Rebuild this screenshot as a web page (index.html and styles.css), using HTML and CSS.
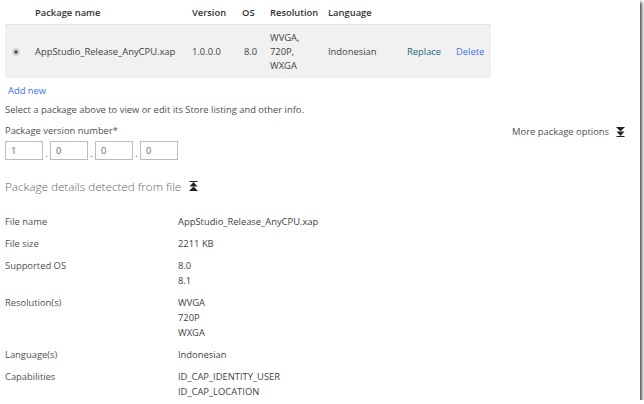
FILE: index.html
```html
<!DOCTYPE html>
<html lang="en">
<head>
  <meta charset="UTF-8" />
  <title>Packages</title>
  <link rel="stylesheet" href="styles.css">
</head>
<body>
  <div class="frame">
    <table class="packages">
      <colgroup>
        <col class="c-radio"><col class="c-name"><col class="c-ver"><col class="c-os">
        <col class="c-res"><col class="c-lang"><col class="c-rep"><col class="c-del">
      </colgroup>
      <thead>
        <tr>
          <th></th>
          <th>Package name</th>
          <th>Version</th>
          <th>OS</th>
          <th>Resolution</th>
          <th>Language</th>
          <th></th>
          <th></th>
        </tr>
      </thead>
      <tbody>
        <tr class="selected">
          <td><span class="radio"></span></td>
          <td>AppStudio_Release_AnyCPU.xap</td>
          <td>1.0.0.0</td>
          <td class="os">8.0</td>
          <td class="res">WVGA,<br>720P,<br>WXGA</td>
          <td>Indonesian</td>
          <td><a class="replace" href="#">Replace</a></td>
          <td><a class="link" href="#">Delete</a></td>
        </tr>
      </tbody>
    </table>

    <a class="link add-new" href="#">Add new</a>
    <p class="hint">Select a package above to view or edit its Store listing and other info.</p>

    <div class="version-row">
      <div class="version">
        <div class="field-label">Package version number*</div>
        <div class="version-inputs">
          <input class="ver-box" value="1"><span class="dot">.</span>
          <input class="ver-box" value="0"><span class="dot">.</span>
          <input class="ver-box" value="0"><span class="dot">.</span>
          <input class="ver-box" value="0">
        </div>
      </div>
      <div class="more-options">
        More package options
        <svg class="chev" width="9" height="10" viewBox="0 0 9 10">
          <polygon points="0,0 9,0 4.5,4.5" fill="#222"/>
          <polygon points="0.5,4.5 8.5,4.5 4.5,9" fill="#222"/>
          <rect x="0.5" y="9" width="8" height="1" fill="#222"/>
        </svg>
      </div>
    </div>

    <h2 class="section-title">
      Package details detected from file
      <svg class="chev" width="9" height="10" viewBox="0 0 9 10">
        <rect x="0.5" y="0" width="8" height="1" fill="#222"/>
        <polygon points="4.5,1 8.5,5.5 0.5,5.5" fill="#222"/>
        <polygon points="4.5,5.5 9,10 0,10" fill="#222"/>
      </svg>
    </h2>

    <div class="details">
      <div class="d-label">File name</div>
      <div>AppStudio_Release_AnyCPU.xap</div>
      <div class="d-label">File size</div>
      <div>2211 KB</div>
      <div class="d-label">Supported OS</div>
      <div>8.0<br>8.1</div>
      <div class="d-label">Resolution(s)</div>
      <div>WVGA<br>720P<br>WXGA</div>
      <div class="d-label">Language(s)</div>
      <div>Indonesian</div>
      <div class="d-label">Capabilities</div>
      <div>ID_CAP_IDENTITY_USER<br>ID_CAP_LOCATION</div>
    </div>
  </div>
</body>
</html>
```

FILE: styles.css
```css
html, body {
  margin: 0;
  padding: 0;
  background: #fff;
  font-family: 'Open Sans', sans-serif;
  font-size: 9.4px;
  color: #3f3f3f;
}

.frame {
  width: 635px;
  height: 400px;
  padding-left: 5px;
  overflow: hidden;
  background: #fff;
  box-shadow: 2px 2px 3px rgba(0, 0, 0, 0.7);
}

.packages {
  width: 486px;
  border-collapse: collapse;
  table-layout: fixed;
}

.c-radio { width: 30px; }
.c-name { width: 157px; }
.c-ver { width: 50px; }
.c-os { width: 28px; }
.c-res { width: 58px; }
.c-lang { width: 79px; }
.c-rep { width: 49px; }
.c-del { width: 35px; }

.packages th {
  height: 24px;
  padding: 0;
  text-align: left;
  font-weight: 600;
  color: #333;
  border-bottom: 1px solid #e2e2e2;
  vertical-align: middle;
}

.packages td {
  padding: 0;
  height: 53px;
  line-height: 14px;
  vertical-align: middle;
  white-space: nowrap;
}

.packages td.os {
  padding-left: 2px;
}

.selected {
  background: #f1f1f1;
}

.radio {
  display: block;
  width: 6px;
  height: 6px;
  margin-left: 7px;
  border-radius: 50%;
  border: 1px solid #c8c8c8;
  background: radial-gradient(circle, #666 0, #666 1.6px, #eee 2.2px);
}

a {
  text-decoration: none;
}

.link {
  color: #3a72e6;
}

.replace {
  color: #1f6380;
}

.add-new {
  display: block;
  margin-top: 5px;
  line-height: 15px;
  padding-left: 3px;
}

.hint {
  margin: 4px 0 0;
  line-height: 15px;
  color: #505050;
}

.version-row {
  display: flex;
  justify-content: space-between;
  margin-top: 6px;
}

.field-label {
  line-height: 15px;
  color: #505050;
}

.version-inputs {
  display: flex;
  align-items: flex-end;
  margin-top: 3px;
}

.ver-box {
  box-sizing: border-box;
  width: 38px;
  height: 19px;
  margin: 0;
  padding: 0 0 0 5px;
  border: 1px solid #bcbcbc;
  font-family: 'Open Sans', sans-serif;
  font-size: 9.4px;
  color: #666;
  outline: none;
}

.dot {
  width: 7px;
  text-align: center;
  line-height: 12px;
  color: #555;
}

.more-options {
  display: flex;
  align-items: center;
  gap: 7px;
  height: 15px;
  margin-top: 1px;
  margin-right: 15px;
  color: #505050;
}

.section-title {
  display: flex;
  align-items: center;
  gap: 8px;
  margin: 16px 0 0;
  line-height: 20px;
  font-size: 11.7px;
  font-weight: 300;
  color: #666;
}

.details {
  display: grid;
  grid-template-columns: 173px 1fr;
  row-gap: 7px;
  margin-top: 18px;
  line-height: 15px;
}

.d-label {
  color: #505050;
}
```
